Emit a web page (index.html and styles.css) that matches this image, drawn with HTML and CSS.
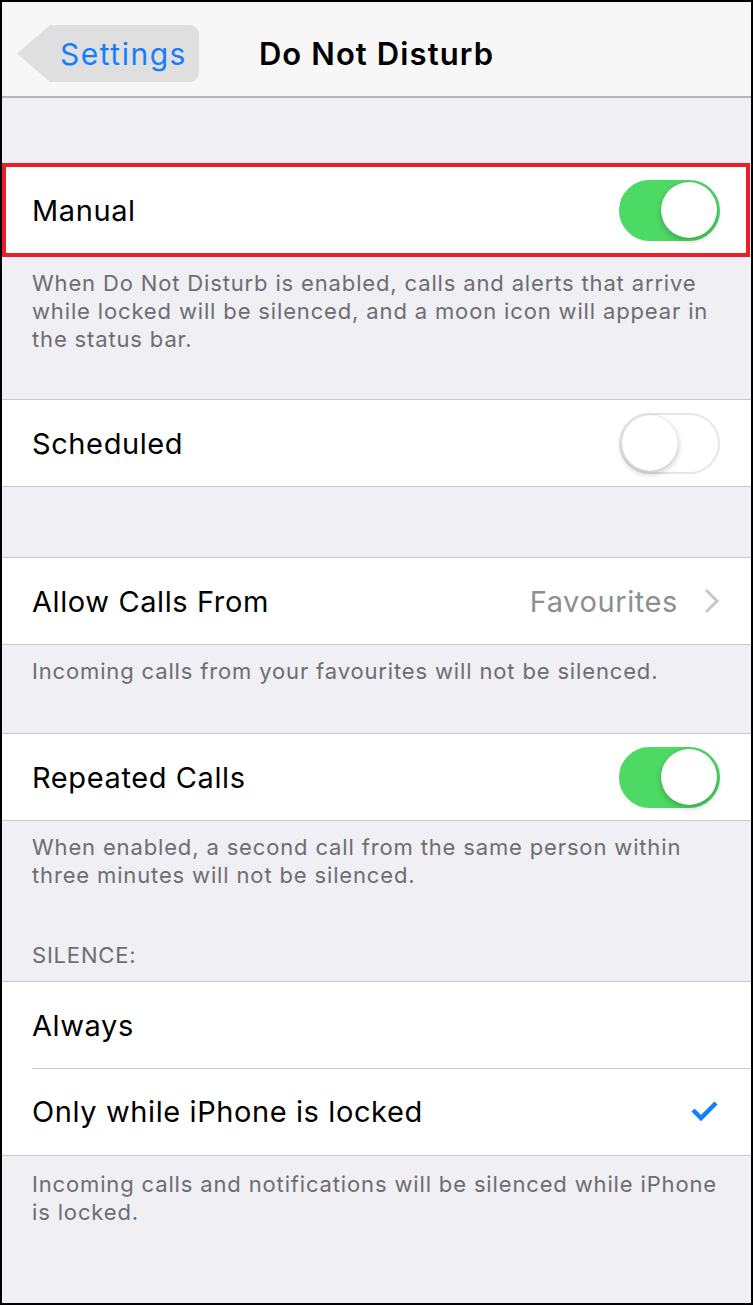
FILE: index.html
```html
<!DOCTYPE html>
<html lang="en">
<head>
  <meta charset="UTF-8" />
  <meta name="viewport" content="width=device-width, initial-scale=1.0"/>
  <title>Do Not Disturb</title>
  <link rel="stylesheet" href="styles.css">
</head>
<body>
<div class="screen">

  <header class="navbar">
    <div class="nav-left">
      <a class="back" href="#">Settings</a>
    </div>
    <h1 class="title">Do Not Disturb</h1>
    <div class="nav-right"></div>
  </header>

  <div class="group group-top marked">
    <div class="row">
      <span class="label">Manual</span>
      <span class="switch on"><span class="knob"></span></span>
    </div>
  </div>
  <p class="note">When Do Not Disturb is enabled, calls and alerts that arrive<br>while locked will be silenced, and a moon icon will appear in<br>the status bar.</p>

  <div class="group">
    <div class="row">
      <span class="label">Scheduled</span>
      <span class="switch"><span class="knob"></span></span>
    </div>
  </div>

  <div class="group group-spaced">
    <div class="row">
      <span class="label">Allow Calls From</span>
      <span class="detail">Favourites</span>
      <svg class="chevron" width="16" height="26" viewBox="0 0 16 26">
        <polyline points="2,2 13,13 2,24" fill="none" stroke="#c7c7cc" stroke-width="3"/>
      </svg>
    </div>
  </div>
  <p class="note note-short">Incoming calls from your favourites will not be silenced.</p>

  <div class="group">
    <div class="row">
      <span class="label">Repeated Calls</span>
      <span class="switch on"><span class="knob"></span></span>
    </div>
  </div>
  <p class="note note-short">When enabled, a second call from the same person within<br>three minutes will not be silenced.</p>

  <h2 class="section-head">SILENCE:</h2>
  <div class="group">
    <div class="row">
      <span class="label">Always</span>
    </div>
    <div class="row">
      <span class="label">Only while iPhone is locked</span>
      <svg class="check" width="28" height="24" viewBox="0 0 28 24">
        <polyline points="3,10 11,18 26,3" fill="none" stroke="#157efb" stroke-width="4.5"/>
      </svg>
    </div>
  </div>
  <p class="note note-last">Incoming calls and notifications will be silenced while iPhone<br>is locked.</p>

</div>
</body>
</html>
```

FILE: styles.css
```css
body {
  margin: 0;
  font-family: Inter, "Noto Sans", sans-serif;
}
.screen {
  height: 1305px;
  box-sizing: border-box;
  border: 2px solid #000;
  background: #efeff4;
  overflow: hidden;
}

/* top bar */
.navbar {
  height: 96px;
  box-sizing: border-box;
  padding-top: 9px;
  display: grid;
  grid-template-columns: 1fr auto 1fr;
  align-items: center;
  background: #f7f7f7;
  border-bottom: 2px solid #b6b6b9;
}
.nav-left {
  padding-left: 15px;
}
.back {
  display: flex;
  align-items: center;
  width: 182px;
  height: 57px;
  box-sizing: border-box;
  padding-left: 43px;
  background: #dfdfdf;
  border-radius: 0 9px 9px 0;
  clip-path: polygon(33px 0, 100% 0, 100% 100%, 33px 100%, 0 50%);
  color: #157efb;
  font-size: 30px;
  letter-spacing: 1.5px;
  text-decoration: none;
}
.title {
  margin: 0;
  font-size: 31px;
  font-weight: 600;
  letter-spacing: 1.1px;
  color: #000;
}

/* grouped table */
.group {
  background: #fff;
  border-top: 1px solid #c8c7cc;
  border-bottom: 1px solid #c8c7cc;
}
.group-top {
  margin-top: 65px;
}
.group-spaced {
  margin-top: 70px;
}
.group.marked {
  border: 4px solid #e8202a;
  margin-right: 1px;
}
.group.marked .row {
  padding-left: 26px;
  padding-right: 26px;
}
.row {
  height: 86px;
  display: flex;
  align-items: center;
  padding: 0 31px 0 30px;
  font-size: 29px;
  letter-spacing: 0.6px;
  color: #000;
}
.row + .row {
  height: 87px;
  box-shadow: inset 0 1px 0 #c8c7cc;
  margin-left: 30px;
  padding-left: 0;
}
.label {
  flex: 1;
}
.detail {
  color: #8e8e93;
  margin-right: 26px;
}
.chevron {
  display: block;
}
.check {
  display: block;
  margin-right: 2px;
}

/* switch */
.switch {
  width: 101px;
  height: 61px;
  box-sizing: border-box;
  border-radius: 31px;
  border: 2px solid #e5e5ea;
  background: #fff;
  display: flex;
  align-items: center;
  padding: 0 1px;
}
.switch.on {
  background: #4cd964;
  border-color: #4cd964;
  justify-content: flex-end;
}
.knob {
  width: 56px;
  height: 56px;
  border-radius: 50%;
  background: #fff;
  box-shadow: 0 3px 6px rgba(0, 0, 0, 0.22), 0 0 1px rgba(0, 0, 0, 0.25);
}

/* footers and headers */
.note {
  margin: 0;
  padding: 12px 20px 46px 30px;
  font-size: 22px;
  letter-spacing: 0.85px;
  line-height: 28px;
  color: #6d6d72;
}
.note-short {
  padding-bottom: 48px;
}
.note-last {
  padding-top: 14px;
}
.section-head {
  margin: 0;
  padding: 4px 30px 12px;
  font-size: 22px;
  font-weight: 400;
  letter-spacing: 0.8px;
  line-height: 28px;
  color: #6d6d72;
}
```
